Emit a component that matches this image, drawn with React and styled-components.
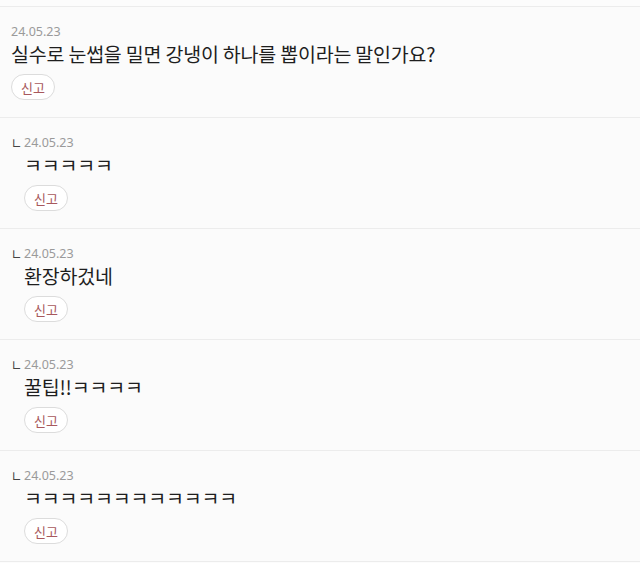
import React from 'react';
import styled, { createGlobalStyle } from 'styled-components';

const GlobalStyle = createGlobalStyle`
  html, body {
    margin: 0;
    padding: 0;
    background: #fcfcfc;
  }
  body {
    font-family: "Noto Sans CJK KR", "Noto Sans", sans-serif;
    color: #222;
  }
`;

const List = styled.ul`
  list-style: none;
  margin: 6px 0 0;
  padding: 0;
  border-top: 1px solid #ececec;
`;

const Item = styled.li`
  display: grid;
  grid-template-columns: ${({ $reply }) => ($reply ? '13px 1fr' : '1fr')};
  padding: 16px 11px 17px;
  border-bottom: 1px solid #ececec;
  background: #fbfbfb;
`;

const Mark = styled.span`
  align-self: start;
  font-size: 12px;
  line-height: 18px;
  color: #444;
  transform: scaleY(1.3);
  transform-origin: left 60%;
`;

const Body = styled.div`
  display: flex;
  flex-direction: column;
  align-items: flex-start;
`;

const Date = styled.span`
  font-family: "Noto Sans", sans-serif;
  font-size: 12.5px;
  line-height: 18px;
  color: #9a9a9a;
`;

const Text = styled.p`
  margin: 1px 0 0;
  font-size: 19.5px;
  line-height: 24px;
  color: #1e1e1e;
  letter-spacing: -0.2px;
`;

const ReportButton = styled.button`
  margin-top: 8px;
  height: 26px;
  padding: 0 9px;
  border: 1px solid #dcdcdc;
  border-radius: 13px;
  background: #fff;
  font-family: "Noto Sans CJK KR", sans-serif;
  font-size: 13px;
  color: #a8585c;
  cursor: pointer;
`;

const comments = [
  { date: '24.05.23', text: '실수로 눈썹을 밀면 강냉이 하나를 뽑이라는 말인가요?' },
  { date: '24.05.23', text: 'ㅋㅋㅋㅋㅋ', reply: true },
  { date: '24.05.23', text: '환장하겄네', reply: true },
  { date: '24.05.23', text: '꿀팁!!ㅋㅋㅋㅋ', reply: true },
  { date: '24.05.23', text: 'ㅋㅋㅋㅋㅋㅋㅋㅋㅋㅋㅋㅋ', reply: true },
];

export default function App() {
  return (
    <>
      <GlobalStyle />
      <List>
        {comments.map((c, i) => (
          <Item key={i} $reply={c.reply}>
            {c.reply && <Mark>ㄴ</Mark>}
            <Body>
              <Date>{c.date}</Date>
              <Text>{c.text}</Text>
              <ReportButton>신고</ReportButton>
            </Body>
          </Item>
        ))}
      </List>
    </>
  );
}
